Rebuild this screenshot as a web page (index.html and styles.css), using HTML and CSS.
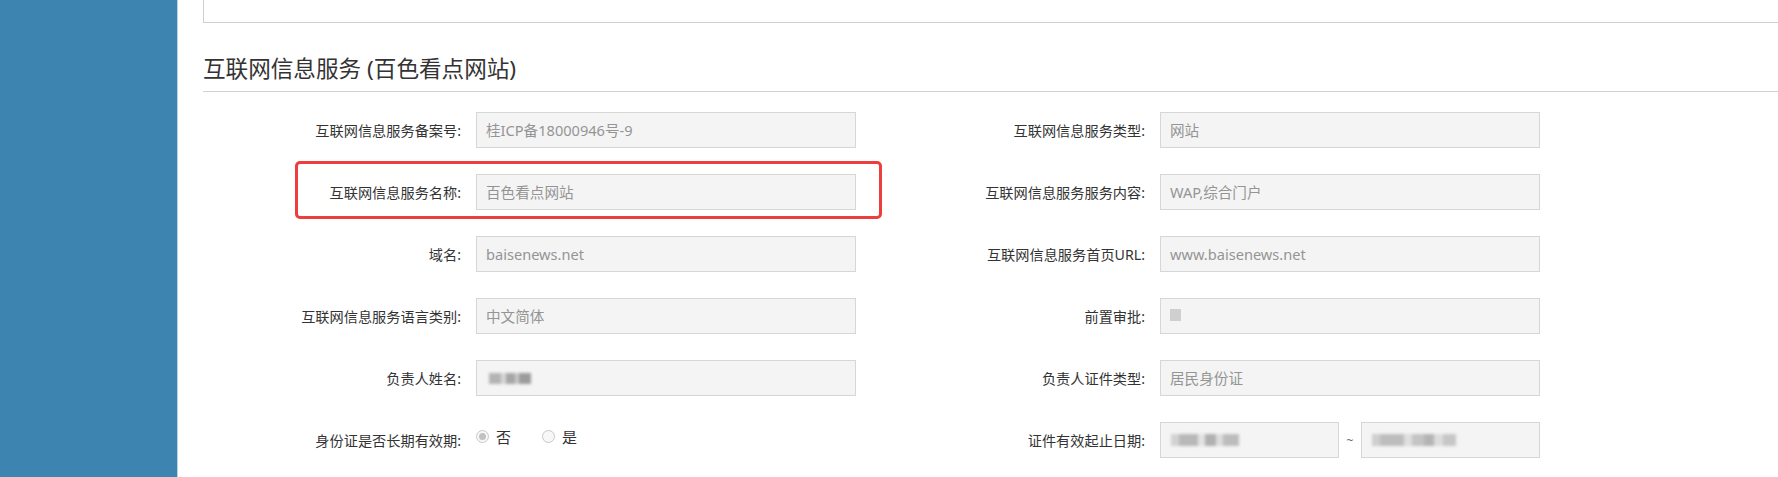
FILE: index.html
```html
<!DOCTYPE html>
<html lang="zh-CN">
<head>
    <meta charset="UTF-8">
    <meta name="viewport" content="width=device-width, initial-scale=1.0">
    <title>互联网信息服务</title>
    <link rel="stylesheet" href="styles.css">
</head>
<body>
    <div class="sidebar"></div>
    <div class="main">
        <div class="prev-box"></div>
        <h2 class="section-title">互联网信息服务 (百色看点网站)</h2>
        <div class="form-grid">
            <div class="field">
                <label>互联网信息服务备案号:</label>
                <div class="input">桂ICP备18000946号-9</div>
            </div>
            <div class="field">
                <label>互联网信息服务类型:</label>
                <div class="input">网站</div>
            </div>

            <div class="field marked">
                <!-- highlight drawn over the row -->
                <div class="mark"></div>
                <label>互联网信息服务名称:</label>
                <div class="input">百色看点网站</div>
            </div>
            <div class="field">
                <label>互联网信息服务服务内容:</label>
                <div class="input">WAP,综合门户</div>
            </div>

            <div class="field">
                <label>域名:</label>
                <div class="input">baisenews.net</div>
            </div>
            <div class="field">
                <label>互联网信息服务首页URL:</label>
                <div class="input">www.baisenews.net</div>
            </div>

            <div class="field">
                <label>互联网信息服务语言类别:</label>
                <div class="input">中文简体</div>
            </div>
            <div class="field">
                <label>前置审批:</label>
                <div class="input"><span class="square"></span></div>
            </div>

            <div class="field">
                <label>负责人姓名:</label>
                <div class="input"><span class="blur blur-name"></span></div>
            </div>
            <div class="field">
                <label>负责人证件类型:</label>
                <div class="input">居民身份证</div>
            </div>

            <div class="field">
                <label>身份证是否长期有效期:</label>
                <div class="radios">
                    <span class="radio-item"><span class="radio checked"></span>否</span>
                    <span class="radio-item"><span class="radio"></span>是</span>
                </div>
            </div>
            <div class="field">
                <label>证件有效起止日期:</label>
                <div class="date-range">
                    <div class="input date"><span class="blur blur-date"></span></div>
                    <span class="tilde">~</span>
                    <div class="input date"><span class="blur blur-date2"></span></div>
                </div>
            </div>
        </div>
    </div>
</body>
</html>
```

FILE: styles.css
```css
body {
    margin: 0;
    display: flex;
    min-height: 100vh;
    background-color: #fff;
    font-family: "Noto Sans", "Noto Sans CJK SC", sans-serif;
    color: #333;
    overflow: hidden;
}
.sidebar {
    width: 177px;
    flex-shrink: 0;
    background-color: #3d85b0;
    border-right: 1px solid #b9d3e3;
}
.main {
    flex: 1;
    padding-left: 25px;
    min-width: 0;
}
.prev-box {
    height: 22px;
    border: 1px solid #cfcfcf;
    border-top: none;
    border-right: none;
}
.section-title {
    margin: 31px 0 0 0;
    font-size: 22.6px;
    font-weight: normal;
    line-height: 30px;
    padding-bottom: 7px;
    border-bottom: 1px solid #d2d2d2;
    color: #333;
}
.form-grid {
    display: grid;
    grid-template-columns: 684px 684px;
    row-gap: 26px;
    margin-top: 20px;
}
.field {
    display: flex;
    align-items: center;
    height: 36px;
}
.field label {
    width: 258px;
    flex-shrink: 0;
    padding-right: 15px;
    text-align: right;
    font-size: 14.2px;
    color: #333;
    white-space: nowrap;
}
.input {
    position: relative;
    width: 380px;
    height: 36px;
    box-sizing: border-box;
    border: 1px solid #d6d6d6;
    background-color: #f4f4f4;
    padding: 0 9px;
    line-height: 34px;
    font-size: 14.6px;
    color: #949494;
    white-space: nowrap;
}
.marked {
    position: relative;
}
.mark {
    position: absolute;
    left: 92px;
    top: -13px;
    width: 587px;
    height: 58px;
    box-sizing: border-box;
    border: 3px solid #ee3d3d;
    border-radius: 5px;
}
.square {
    display: inline-block;
    width: 11px;
    height: 12px;
    margin-top: 10px;
    vertical-align: top;
    background-color: #cfcfcf;
}
.blur {
    position: absolute;
    filter: blur(1.5px);
}
.blur-name {
    left: 12px;
    top: 12px;
    width: 42px;
    height: 11px;
    background: linear-gradient(90deg, #b4b4b4 0 28%, #d6d6d6 28% 40%, #a6a6a6 40% 62%, #c8c8c8 62% 72%, #9c9c9c 72% 100%);
}
.blur-date {
    left: 10px;
    top: 11px;
    width: 68px;
    height: 12px;
    background: linear-gradient(90deg, #d2d2d2 0 12%, #b8b8b8 12% 40%, #e2e2e2 40% 50%, #b0b0b0 50% 66%, #dcdcdc 66% 76%, #bcbcbc 76% 100%);
}
.blur-date2 {
    left: 10px;
    top: 11px;
    width: 84px;
    height: 12px;
    background: linear-gradient(90deg, #cfcfcf 0 10%, #bdbdbd 10% 38%, #dedede 38% 48%, #c4c4c4 48% 62%, #b4b4b4 62% 74%, #dcdcdc 74% 84%, #c6c6c6 84% 100%);
}
.radios {
    display: flex;
    align-self: flex-start;
    padding-top: 4px;
    font-size: 15px;
    color: #333;
}
.radio-item {
    display: flex;
    align-items: center;
    margin-right: 31px;
}
.radio {
    width: 13px;
    height: 13px;
    box-sizing: border-box;
    border: 1px solid #c9c9c9;
    border-radius: 50%;
    background-color: #f7f7f7;
    margin-right: 7px;
    position: relative;
}
.radio.checked::after {
    content: "";
    position: absolute;
    left: 2px;
    top: 2px;
    width: 7px;
    height: 7px;
    border-radius: 50%;
    background-color: #c2c2c2;
}
.date-range {
    display: flex;
    align-items: center;
}
.input.date {
    width: 179px;
}
.tilde {
    width: 22px;
    text-align: center;
    font-size: 12px;
    color: #666;
}
```
